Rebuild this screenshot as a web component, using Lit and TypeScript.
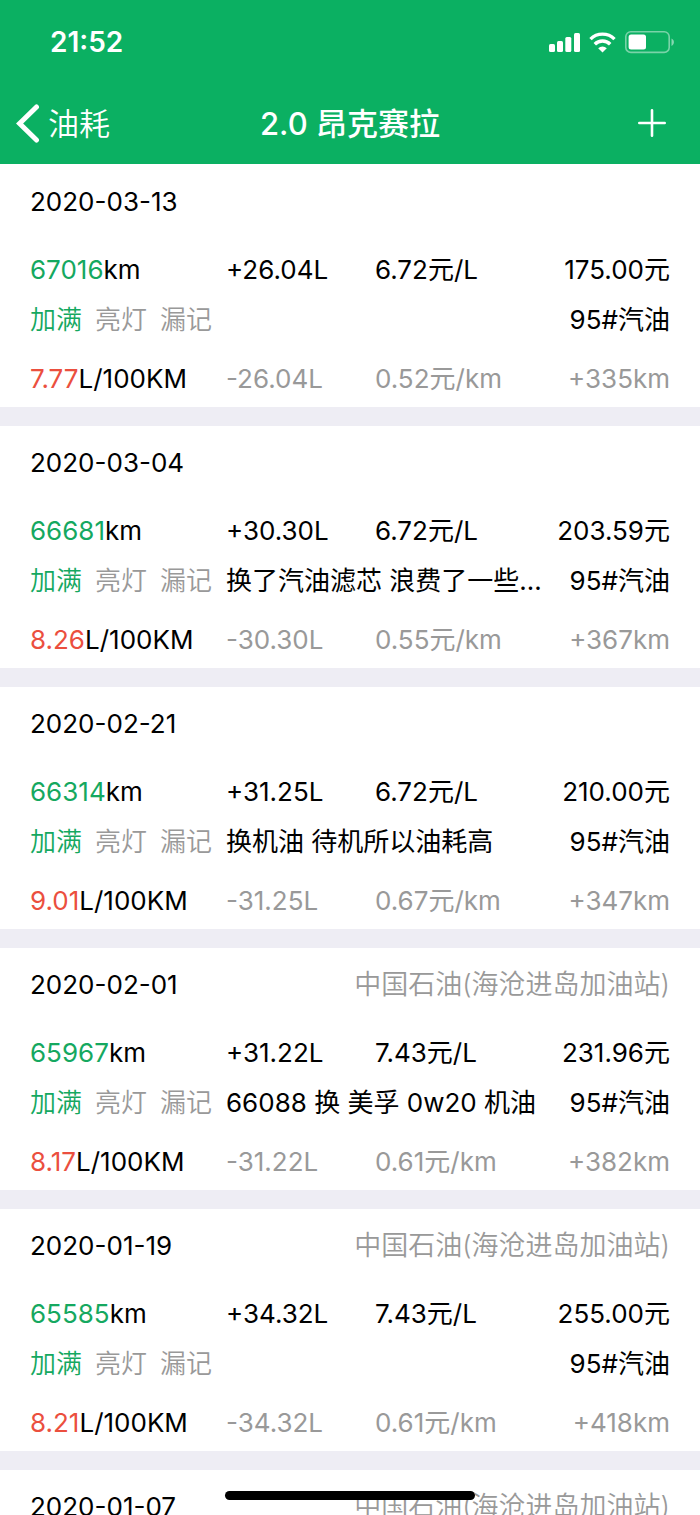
import { LitElement, html, css, nothing } from "lit";
import { customElement, property } from "lit/decorators.js";

interface FuelRecord {
  date: string;
  station?: string;
  odometer: string;
  added: string;
  price: string;
  total: string;
  note?: string;
  fuel: string;
  consumption: string;
  used: string;
  cost: string;
  distance: string;
}

const STATION = "中国石油(海沧进岛加油站)";

const RECORDS: FuelRecord[] = [
  { date: "2020-03-13", odometer: "67016", added: "+26.04L", price: "6.72元/L", total: "175.00元", fuel: "95#汽油", consumption: "7.77", used: "-26.04L", cost: "0.52元/km", distance: "+335km" },
  { date: "2020-03-04", odometer: "66681", added: "+30.30L", price: "6.72元/L", total: "203.59元", note: "换了汽油滤芯 浪费了一些汽油", fuel: "95#汽油", consumption: "8.26", used: "-30.30L", cost: "0.55元/km", distance: "+367km" },
  { date: "2020-02-21", odometer: "66314", added: "+31.25L", price: "6.72元/L", total: "210.00元", note: "换机油 待机所以油耗高", fuel: "95#汽油", consumption: "9.01", used: "-31.25L", cost: "0.67元/km", distance: "+347km" },
  { date: "2020-02-01", station: STATION, odometer: "65967", added: "+31.22L", price: "7.43元/L", total: "231.96元", note: "66088 换 美孚 0w20 机油", fuel: "95#汽油", consumption: "8.17", used: "-31.22L", cost: "0.61元/km", distance: "+382km" },
  { date: "2020-01-19", station: STATION, odometer: "65585", added: "+34.32L", price: "7.43元/L", total: "255.00元", fuel: "95#汽油", consumption: "8.21", used: "-34.32L", cost: "0.61元/km", distance: "+418km" },
];

const NEXT_DATE = "2020-01-07";

@customElement("status-bar")
class StatusBar extends LitElement {
  static styles = css`
    :host { display: flex; align-items: center; justify-content: space-between; height: 84px; padding: 0 25px 0 50px; color: #fff; }
    .time { font-size: 28px; line-height: 36px; font-weight: 600; }
    .icons { display: flex; align-items: center; gap: 8px; }
    svg { display: block; }
  `;
  render() {
    return html`
      <span class="time">21:52</span>
      <span class="icons">
        <svg width="33" height="24" viewBox="0 0 33 24" fill="#fff" aria-hidden="true">
          <rect x="1" y="14" width="6" height="8" rx="1.5" />
          <rect x="9" y="11" width="6" height="11" rx="1.5" />
          <rect x="17.3" y="7" width="6" height="15" rx="1.5" />
          <rect x="26" y="3" width="6" height="19" rx="1.5" />
        </svg>
        <svg width="27" height="24" viewBox="0 0 27 24" fill="none" stroke="#fff" stroke-width="3.4" aria-hidden="true">
          <path d="M1.5 9.1a17 17 0 0 1 24 0" />
          <path d="M5.8 14.2a10.8 10.8 0 0 1 15.4 0" />
          <path d="M9.2 18.2a6 6 0 0 1 8.6 0L13.5 22.4z" fill="#fff" stroke="none" />
        </svg>
        <svg width="51" height="24" viewBox="0 0 51 24" aria-hidden="true">
          <rect x="1.8" y="1.8" width="43.4" height="20.6" rx="5" fill="none" stroke="#fff" stroke-opacity=".45" stroke-width="1.6" />
          <rect x="4.6" y="4.6" width="17.4" height="15" rx="2.5" fill="#fff" />
          <path d="M47.5 8.5c3.2 1.4 3.2 6 0 7.4z" fill="#fff" fill-opacity=".5" />
        </svg>
      </span>
    `;
  }
}

@customElement("nav-bar")
class NavBar extends LitElement {
  @property() heading = "";
  @property() back = "";
  static styles = css`
    :host { display: grid; grid-template-columns: 1fr auto 1fr; align-items: center; height: 80px; padding: 0 16px; color: #fff; }
    button { display: flex; align-items: center; border: 0; padding: 0; background: none; color: inherit; font: inherit; cursor: pointer; }
    .back { justify-self: start; gap: 8px; font-size: 31px; line-height: 40px; font-weight: 350; }
    .add { justify-self: end; padding: 8px 18px 10px 8px; }
    h1 { margin: 0; font-size: 31px; line-height: 40px; font-weight: 500; }
    svg { display: block; }
  `;
  render() {
    return html`
      <button class="back" type="button">
        <svg width="24" height="40" viewBox="0 0 24 40" fill="none" stroke="#fff" stroke-width="5" stroke-linecap="round" aria-hidden="true">
          <path d="M20.5 3 3.6 19.5 20.5 36" />
        </svg>
        <span>${this.back}</span>
      </button>
      <h1>${this.heading}</h1>
      <button class="add" type="button" aria-label="添加">
        <svg width="28" height="28" viewBox="0 0 28 28" stroke="#fff" stroke-width="2.6" stroke-linecap="round" aria-hidden="true">
          <path d="M14 1.3v25.4M1.3 14h25.4" />
        </svg>
      </button>
    `;
  }
}

@customElement("app-root")
class AppRoot extends LitElement {
  static styles = css`
    :host { display: flex; flex-direction: column; position: relative; height: 100vh; overflow: hidden; background: #fff; color: #000; font-family: Inter, "Noto Sans CJK SC", sans-serif; }
    .top { flex: none; background: #0bb062; }
    .list { flex: 1; min-height: 0; overflow-y: auto; scrollbar-width: none; padding-top: 1px; }
    .card { padding: 19px 30px 10px; font-size: 26px; line-height: 36px; white-space: nowrap; }
    .card + .card { border-top: 19px solid #eeedf4; }
    .head { display: flex; justify-content: space-between; }
    .station { font-size: 27px; font-weight: 350; }
    .amounts { display: grid; grid-template-columns: 196fr 149fr 295fr; margin-top: 32px; }
    .middle { display: grid; grid-template-columns: 196fr 444fr; margin-top: 14px; }
    .results { margin-top: 23px; }
    .tags { display: flex; gap: 13px; font-weight: 350; }
    .detail { display: flex; gap: 14px; min-width: 0; }
    .note { flex: 1; min-width: 0; overflow: hidden; text-overflow: ellipsis; }
    .muted { color: #999; }
    .unit { color: #000; }
    .green { color: #15a860; }
    .red { color: #eb4f3e; }
    .home { position: absolute; left: 50%; bottom: 15px; width: 250px; height: 9px; margin-left: -125px; border-radius: 5px; background: #000; }
  `;

  private head(date: string, station?: string) {
    return html`
      <div class="head">
        <time>${date}</time>
        ${station ? html`<span class="muted station">${station}</span>` : nothing}
      </div>
    `;
  }

  private card(r: FuelRecord) {
    return html`
      <article class="card">
        ${this.head(r.date, r.station)}
        <div class="amounts">
          <span><span class="green">${r.odometer}</span>km</span>
          <span>${r.added}</span>
          <span class="detail"><span class="note">${r.price}</span><span>${r.total}</span></span>
        </div>
        <div class="middle">
          <span class="tags"><span class="green">加满</span><span class="muted">亮灯</span><span class="muted">漏记</span></span>
          <span class="detail"><span class="note">${r.note ?? nothing}</span><span>${r.fuel}</span></span>
        </div>
        <div class="amounts results muted">
          <span><span class="red">${r.consumption}</span><span class="unit">L/100KM</span></span>
          <span>${r.used}</span>
          <span class="detail"><span class="note">${r.cost}</span><span>${r.distance}</span></span>
        </div>
      </article>
    `;
  }

  render() {
    return html`
      <header class="top">
        <status-bar></status-bar>
        <nav-bar heading="2.0 昂克赛拉" back="油耗"></nav-bar>
      </header>
      <main class="list">
        ${RECORDS.map((r) => this.card(r))}
        <article class="card">${this.head(NEXT_DATE, STATION)}</article>
      </main>
      <div class="home"></div>
    `;
  }
}
